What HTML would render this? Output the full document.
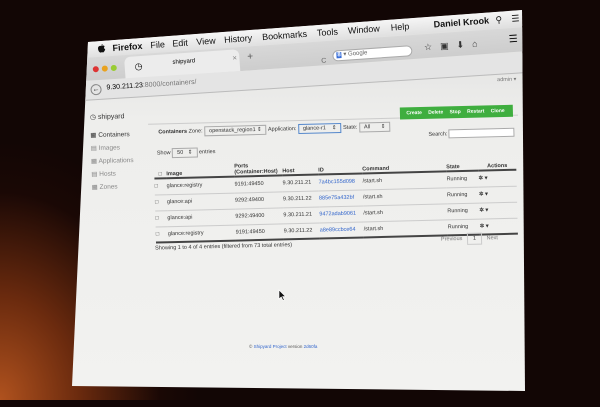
<!DOCTYPE html>
<html><head><meta charset="utf-8"><style>
*{margin:0;padding:0;box-sizing:border-box}
body{width:600px;height:400px;overflow:hidden;position:relative;font-family:"Liberation Sans",sans-serif;
background:radial-gradient(ellipse 200px 260px at 0px 400px,#b0521e 0%,#6a2a0e 40%,#1a0805 80%,#120605 100%) ,#110605;}
.scr{position:absolute;left:0;top:0;width:600px;height:400px;background:linear-gradient(180deg,#dcdcdc 0%,#eeeeec 30%,#f2f2f0 100%);
clip-path:polygon(88px 42px,522px 10px,525px 391px,72px 386px);}
.a{position:absolute;white-space:nowrap}
.menu{left:86px;top:42px;width:445px;height:16px;transform:rotate(-4.2deg);transform-origin:0 0;background:linear-gradient(#f6f6f6,#e0e0e0);font-size:9px;color:#111}
.menu span{position:absolute;top:3px}
.tb{left:84px;top:58px;width:445px;height:24px;transform:rotate(-4deg);transform-origin:0 0;background:linear-gradient(#d8d8d8,#cdcdcd);}
.url{left:82px;top:81px;width:450px;height:20px;transform:rotate(-3.6deg);transform-origin:0 0;background:#e4e4e4;border-bottom:1px solid #bbb}
.c{left:0;top:0;width:600px;height:400px;transform:rotate(-1.4deg);transform-origin:300px 200px;font-size:5.5px;color:#333}
.btn{background:#3fae3f;color:#fff;font-weight:bold;font-size:5px}
td{border-top:1px solid #ccc}
</style></head><body>
<div class="scr">
 <div class="a menu">
  <svg class="a" style="left:11px;top:3px" width="8" height="9" viewBox="0 0 8 9"><path d="M4 2.2C3 1.6 0.5 1.8 0.5 4.5S2 8.8 3 8.6 4 8.3 5 8.6 7.5 6.5 7.6 5.6C6.3 5 6.3 3 7.4 2.6 6 1.3 4.8 1.8 4 2.2ZM4 1.8C4 1 4.6 0.3 5.4 0.2 5.4 1 4.8 1.7 4 1.8Z" fill="#111"/></svg>
  <span style="left:26px;font-weight:bold">Firefox</span><span style="left:64px">File</span><span style="left:86px">Edit</span>
  <span style="left:110px">View</span><span style="left:138px">History</span><span style="left:176px">Bookmarks</span>
  <span style="left:231px">Tools</span><span style="left:262px">Window</span><span style="left:305px">Help</span>
  <span style="left:348px;font-weight:bold">Daniel Krook</span><span style="left:410px">&#9906;</span><span style="left:426px">&#9776;</span>
 </div>
 <div class="a tb">
  <div class="a" style="left:8px;top:9px;width:6px;height:6px;border-radius:3px;background:#d33"></div>
  <div class="a" style="left:17px;top:9px;width:6px;height:6px;border-radius:3px;background:#e9a21f"></div>
  <div class="a" style="left:26px;top:9px;width:6px;height:6px;border-radius:3px;background:#9c3"></div>
  <div class="a" style="left:40px;top:2px;width:115px;height:22px;background:#ececec;border-radius:6px 6px 0 0"></div>
  <div class="a" style="left:50px;top:7px;font-size:9px">&#9719;</div>
  <div class="a" style="left:88px;top:8px;font-size:6px">shipyard</div>
  <div class="a" style="left:148px;top:6px;font-size:8px;color:#888">×</div>
  <div class="a" style="left:163px;top:5px;font-size:10px;color:#555">+</div>
  <div class="a" style="left:248px;top:10px;width:80px;height:11px;background:#fff;border-radius:6px;border:1px solid #aaa;font-size:6px;color:#666;padding-left:3px"><b style="background:#3a6fd8;color:#fff;padding:0 1px">8</b> ▾ Google</div>
  <div class="a" style="left:340px;top:8px;font-size:9px;color:#333;letter-spacing:8px">☆▣⬇⌂</div>
  <div class="a" style="left:425px;top:6px;font-size:10px">☰</div>
 </div>
 <div class="a url">
  <div class="a" style="left:8px;top:4px;width:11px;height:11px;border-radius:6px;border:1px solid #888;font-size:7px;text-align:center;line-height:10px">&larr;</div>
  <div class="a" style="left:24px;top:5px;font-size:7px">9.30.211.23<span style="color:#777">:8000/containers/</span></div>
  <div class="a" style="left:240px;top:-8px;font-size:7px;color:#666">C</div>
 </div>
 <div class="a c">
  <div class="a" style="left:500px;top:82px;color:#777">admin ▾</div>
  <div class="a" style="left:92px;top:108px;font-size:7px">&#9719; shipyard</div>
  <div class="a" style="left:92px;top:126px;font-size:6.5px">&#9638; Containers</div>
  <div class="a" style="left:92px;top:139px;font-size:6.5px;color:#888">&#9636; Images</div>
  <div class="a" style="left:92px;top:152px;font-size:6.5px;color:#888">&#9638; Applications</div>
  <div class="a" style="left:92px;top:165px;font-size:6.5px;color:#888">&#9636; Hosts</div>
  <div class="a" style="left:92px;top:178px;font-size:6.5px;color:#888">&#9638; Zones</div>
  <div class="a" style="left:150px;top:120px;width:370px;height:140px;border-top:1px solid #ccc"></div>
  <div class="a" style="left:160px;top:126px"><b>Containers</b> Zone: <span style="border:1px solid #aaa;padding:1px 4px">openstack_region1 ⇕</span> Application: <span style="border:1px solid #58c;padding:1px 4px">glance-r1 &nbsp;&nbsp;&nbsp;⇕</span> State: <span style="border:1px solid #aaa;padding:1px 4px">All &nbsp;&nbsp;&nbsp;&nbsp;&nbsp;&nbsp;⇕</span></div>
  <div class="a btn" style="left:402px;top:110px;width:113px;height:12px;padding-top:3px;word-spacing:5px">&nbsp;Create Delete Stop Restart Clone</div>
  <div class="a" style="left:430px;top:133px">Search: <span style="display:inline-block;width:66px;height:9px;border:1px solid #aaa;vertical-align:middle;background:#fff"></span></div>
  <div class="a" style="left:158px;top:147px">Show <span style="border:1px solid #aaa;padding:1px 4px">50 &nbsp;&nbsp;⇕</span> entries</div>
  <table class="a" style="left:155px;top:155px;width:362px;border-collapse:collapse;font-size:5.5px">
   <tr style="height:20px;vertical-align:bottom"><th style="width:12px">□</th><th style="text-align:left;width:68px">Image</th><th style="text-align:left;width:48px">Ports<br>(Container:Host)</th><th style="text-align:left;width:36px">Host</th><th style="text-align:left;width:44px">ID</th><th style="text-align:left;width:84px">Command</th><th style="text-align:left;width:32px">State</th><th>Actions</th></tr>
   <tr style="height:16px;border-top:2px solid #444"><td>□</td><td>glance:registry</td><td>9191:49450</td><td>9.30.211.21</td><td style="color:#36c">7a4bc155d098</td><td>/start.sh</td><td>Running</td><td><b>✲ ▾</b></td></tr>
   <tr style="height:16px"><td>□</td><td>glance:api</td><td>9292:49400</td><td>9.30.211.22</td><td style="color:#36c">885e75a432bf</td><td>/start.sh</td><td>Running</td><td><b>✲ ▾</b></td></tr>
   <tr style="height:16px"><td>□</td><td>glance:api</td><td>9292:49400</td><td>9.30.211.21</td><td style="color:#36c">9472adab9061</td><td>/start.sh</td><td>Running</td><td><b>✲ ▾</b></td></tr>
   <tr style="height:16px;border-bottom:2px solid #444"><td>□</td><td>glance:registry</td><td>9191:49450</td><td>9.30.211.22</td><td style="color:#36c">a8e89ccbce64</td><td>/start.sh</td><td>Running</td><td><b>✲ ▾</b></td></tr>
  </table>
  <div class="a" style="left:154px;top:242px">Showing 1 to 4 of 4 entries (filtered from 73 total entries)</div>
  <div class="a" style="left:440px;top:240px;color:#777">Previous &nbsp;&nbsp;<span style="border:1px solid #ccc;padding:2px 5px;color:#333">1</span>&nbsp;&nbsp; Next</div>
 </div>
 <svg class="a" style="left:278px;top:289px" width="8" height="12" viewBox="0 0 8 12"><path d="M1 1 L1 10 L3.2 8 L5 11.5 L6.3 11 L4.6 7.5 L7.5 7.5 Z" fill="#111" stroke="#fff" stroke-width="0.6"/></svg>
 <div class="a" style="left:249px;top:344px;font-size:4.5px;color:#555">© <span style="color:#36c">Shipyard Project</span> version <span style="color:#36c">2d60fa</span></div>
</div>
</body></html>
